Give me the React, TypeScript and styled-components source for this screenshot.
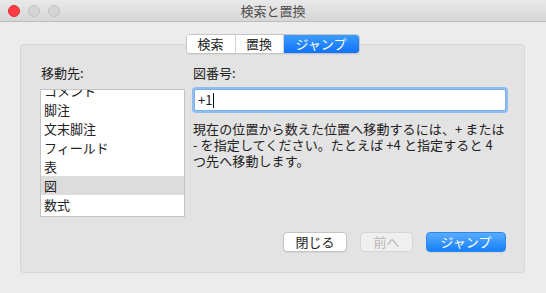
import styled, { createGlobalStyle } from 'styled-components';

const GlobalStyle = createGlobalStyle`
    html, body {
        margin: 0;
        padding: 0;
        background: #ececec;
    }
    * {
        box-sizing: border-box;
    }
`

const font = `"Noto Sans CJK JP", "Liberation Sans", sans-serif`;

const tabs = ["検索", "置換", "ジャンプ"];
const targets = ["コメント", "脚注", "文末脚注", "フィールド", "表", "図", "数式"];

function App() {
    return (
        <Window>
            <GlobalStyle />
            <TitleBar>
                <Lights>
                    <Light $color="#fc3d46" $border="#de2f38" />
                    <Light $color="#d4d4d4" $border="#c3c3c3" />
                    <Light $color="#d4d4d4" $border="#c3c3c3" />
                </Lights>
                <Title>検索と置換</Title>
            </TitleBar>
            <Body>
                <TabRow>
                    <Segmented>
                        {tabs.map((t, i) => <Tab key={i} $active={i === 2} $w={i === 2 ? 76 : 48}>{t}</Tab>)}
                    </Segmented>
                </TabRow>
                <Group>
                    <Columns>
                        <LeftCol>
                            <Label>移動先:</Label>
                            <List>
                                <ListInner>
                                    {targets.map((t, i) => <Row key={i} $selected={t === "図"}>{t}</Row>)}
                                </ListInner>
                            </List>
                        </LeftCol>
                        <RightCol>
                            <Label>図番号:</Label>
                            <Field>
                                <span>+1</span>
                                <Caret />
                            </Field>
                            <Help>
                                <HelpLine>現在の位置から数えた位置へ移動するには、+ または</HelpLine>
                                <HelpLine>- を指定してください。たとえば +4 と指定すると 4</HelpLine>
                                <HelpLine>つ先へ移動します。</HelpLine>
                            </Help>
                        </RightCol>
                    </Columns>
                    <Buttons>
                        <Button $kind="normal">閉じる</Button>
                        <Button $kind="disabled">前へ</Button>
                        <Button $kind="primary">ジャンプ</Button>
                    </Buttons>
                </Group>
            </Body>
        </Window>
    );
}

export default App;

const Window = styled.div`
    width: 546px;
    height: 293px;
    background: #ececec;
    font-family: ${font};
    font-size: 13px;
    color: #222;
    display: flex;
    flex-direction: column;
    overflow: hidden;
`

const TitleBar = styled.div`
    height: 22px;
    flex: none;
    display: flex;
    align-items: center;
    justify-content: center;
    position: relative;
    background: linear-gradient(to bottom, #e9e9e9 0%, #d6d6d6 100%);
    border-bottom: 1px solid #bdbdbd;
`

const Lights = styled.div`
    position: absolute;
    left: 8px;
    top: 5px;
    display: flex;
    gap: 8px;
`

const Light = styled.div<{ $color: string; $border: string }>`
    width: 12px;
    height: 12px;
    border-radius: 50%;
    background: ${p => p.$color};
    border: 1px solid ${p => p.$border};
`

const Title = styled.div`
    font-size: 13px;
    color: #4c4c4c;
    line-height: 16px;
`

const Body = styled.div`
    flex: 1;
    display: flex;
    flex-direction: column;
    padding: 12px 21px 20px 20px;
`

const TabRow = styled.div`
    display: flex;
    justify-content: center;
    margin-bottom: -10px;
    position: relative;
    z-index: 1;
`

const Segmented = styled.div`
    display: flex;
    height: 20px;
    border: 1px solid #c5c5c5;
    border-radius: 4px;
    background: #fff;
    overflow: hidden;
    box-shadow: 0 1px 0 rgba(0, 0, 0, 0.05);
`

const Tab = styled.div<{ $active: boolean; $w: number }>`
    width: ${p => p.$w}px;
    display: flex;
    align-items: center;
    justify-content: center;
    line-height: 16px;
    color: ${p => p.$active ? "#fff" : "#222"};
    background: ${p => p.$active ? "linear-gradient(to bottom, #3c9cfd 0%, #0f72f8 100%)" : "#fff"};
    & + & {
        border-left: 1px solid #d4d4d4;
    }
`

const Group = styled.div`
    height: 229px;
    display: flex;
    flex-direction: column;
    background: #e3e3e3;
    border: 1px solid #d5d5d5;
    border-radius: 4px;
    padding: 20px 17px 20px 19px;
`

const Columns = styled.div`
    display: flex;
    gap: 7px;
`

const LeftCol = styled.div`
    width: 145px;
    display: flex;
    flex-direction: column;
`

const RightCol = styled.div`
    flex: 1;
    display: flex;
    flex-direction: column;
    padding-right: 1px;
`

const Label = styled.div`
    line-height: 16px;
    height: 16px;
    margin-bottom: 8px;
    padding-left: 1px;
`

const List = styled.div`
    height: 128px;
    background: #fff;
    border: 1px solid #c3c3c3;
    overflow: hidden;
`

const ListInner = styled.div`
    margin-top: -9px;
`

const Row = styled.div<{ $selected: boolean }>`
    height: 19px;
    line-height: 19px;
    padding-left: 3px;
    background: ${p => p.$selected ? "#dcdcdc" : "transparent"};
`

const Field = styled.div`
    height: 22px;
    margin: 0 0 0 2px;
    display: flex;
    align-items: center;
    padding-left: 3px;
    background: #fff;
    border: 1px solid #7eb0ea;
    border-radius: 2px;
    box-shadow: 0 0 0 2px #8ebdf1;
    line-height: 16px;
`

const Caret = styled.div`
    width: 1px;
    height: 15px;
    background: #111;
    margin-left: 1px;
`

const Help = styled.div`
    margin-top: 10px;
    padding-left: 1px;
    display: flex;
    flex-direction: column;
`

const HelpLine = styled.div`
    line-height: 16px;
    white-space: nowrap;
    letter-spacing: 0.1px;
`

const Buttons = styled.div`
    margin-top: auto;
    display: flex;
    justify-content: flex-end;
    gap: 13px;
    padding-right: 1px;
`

const Button = styled.div<{ $kind: "normal" | "disabled" | "primary" }>`
    height: 20px;
    min-width: ${p => p.$kind === "primary" ? 80 : p.$kind === "disabled" ? 53 : 64}px;
    display: flex;
    align-items: center;
    justify-content: center;
    border-radius: 4px;
    line-height: 16px;
    color: ${p => p.$kind === "primary" ? "#fff" : p.$kind === "disabled" ? "#b8b8b8" : "#222"};
    background: ${p => p.$kind === "primary"
        ? "linear-gradient(to bottom, #5aacfd 0%, #1580fb 100%)"
        : p.$kind === "disabled" ? "#efefef" : "#fff"};
    border: 1px solid ${p => p.$kind === "primary" ? "#2b86f5" : p.$kind === "disabled" ? "#d6d6d6" : "#c4c4c4"};
    box-shadow: ${p => p.$kind === "disabled" ? "none" : "0 1px 0 rgba(0, 0, 0, 0.06)"};
`
